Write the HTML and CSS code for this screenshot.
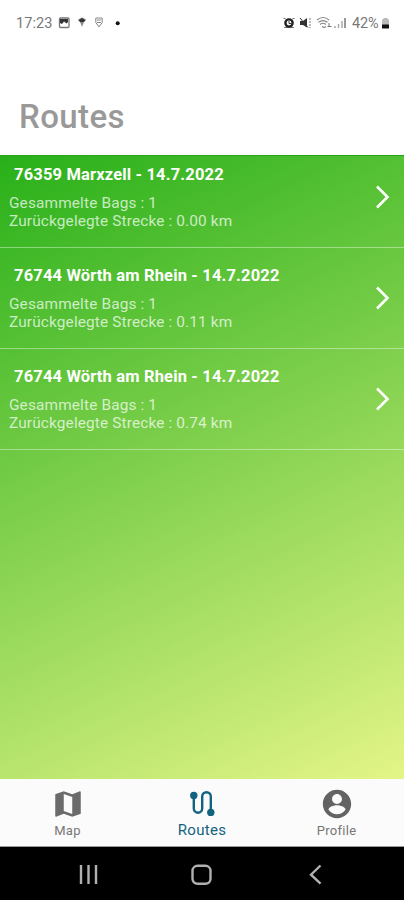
FILE: index.html
```html
<!DOCTYPE html>
<html lang="de">
<head>
<meta charset="utf-8">
<title>Routes</title>
<link rel="stylesheet" href="styles.css">
</head>
<body>
<div class="status">
  <span class="time">17:23</span>
  <svg class="st-left" width="66" height="14" viewBox="0 0 66 14">
    <rect x="1.500" y="2" width="9.500" height="9.500" rx="1" fill="none" stroke="#777" stroke-width="1.300"/>
    <path d="M2 3h8v3L8.500 7.500 6 5.500 4 8 2 7z" fill="#333"/>
    <path d="M20 3.500 24 1.500l4 2-2.500 3.500L24 11 22.500 7z" fill="#888"/>
    <path d="M20.500 4.500 24 2l3.500 2.500-2 1.500h-3z" fill="#333"/>
    <path d="M37.800 2h6.400v4.500L41 11 37.800 6.500z" fill="none" stroke="#888"/>
    <path d="M39 4h4M39 6.500h4" stroke="#888"/>
    <circle cx="59.700" cy="7.200" r="2" fill="#111"/>
  </svg>
  <svg class="st-right" width="66" height="14" viewBox="0 0 66 14">
    <path d="M1.500 2.500h2M10.500 2.500h2M2 11.500h10" stroke="#777" fill="none"/>
    <circle cx="7" cy="7" r="3.600" fill="#fff" stroke="#222" stroke-width="2.400"/>
    <path d="M7 5v2.500h2" stroke="#333" fill="none"/>
    <path d="M18 5h3l4-3v9.500L21 9h-3z" fill="#333"/>
    <path d="M18 2l8 9.500" stroke="#333"/><path d="M28 2v10" stroke="#777" stroke-dasharray="2 1"/>
    <path d="M35 4q6-5 12 0M36.500 6.300q4.500-3.500 9 0M38 8.500q3-2.500 6 0M40 10.500l2 1 2-1" fill="none" stroke="#888" stroke-width="1.200"/>
    <path d="M47 7v4M45.500 10.500h4" stroke="#777"/>
    <path d="M53 10v2M56.500 8v4M60 5v7" stroke="#aaa" stroke-width="1.500"/><path d="M63 2v10" stroke="#777" stroke-width="1.500"/>
  </svg>
  <span class="pct">42%</span>
  <svg class="batt" width="9" height="13" viewBox="0 0 9 13">
    <path d="M1 3 3 1h3l2 2v5H1z" fill="#bbb"/><path d="M1 7.500h7v4H1z" fill="#111"/>
  </svg>
</div>
<header class="header"><h1>Routes</h1></header>
<main class="list">
  <div class="row">
    <div class="info"><h2>76359 Marxzell - 14.7.2022</h2><p class="bags">Gesammelte Bags : 1</p><p>Zurückgelegte Strecke : 0.00 km</p></div>
    <svg class="chev" width="16" height="26" viewBox="0 0 16 26"><path d="M2 2.500 12.500 13 2 23.500" fill="none" stroke="#fff" stroke-width="2.600"/></svg>
  </div>
  <div class="row">
    <div class="info"><h2>76744 Wörth am Rhein - 14.7.2022</h2><p class="bags">Gesammelte Bags : 1</p><p>Zurückgelegte Strecke : 0.11 km</p></div>
    <svg class="chev" width="16" height="26" viewBox="0 0 16 26"><path d="M2 2.500 12.500 13 2 23.500" fill="none" stroke="#fff" stroke-width="2.600"/></svg>
  </div>
  <div class="row">
    <div class="info"><h2>76744 Wörth am Rhein - 14.7.2022</h2><p class="bags">Gesammelte Bags : 1</p><p>Zurückgelegte Strecke : 0.74 km</p></div>
    <svg class="chev" width="16" height="26" viewBox="0 0 16 26"><path d="M2 2.500 12.500 13 2 23.500" fill="none" stroke="#fff" stroke-width="2.600"/></svg>
  </div>
</main>
<nav class="tabs">
  <div class="tab">
    <svg width="34" height="34" viewBox="0 0 24 24"><path fill="#6b6b6b" d="M20.500 3l-.16.030L15 5.100 9 3 3.360 4.900c-.21.070-.36.250-.36.480V20.500c0 .28.220.5.500.5l.16-.030L9 18.900l6 2.100 5.640-1.900c.21-.070.36-.250.36-.480V3.500c0-.28-.22-.5-.5-.5zM15 19l-6-2.110V5l6 2.110V19z"/></svg>
    <span>Map</span>
  </div>
  <div class="tab active">
    <svg width="34" height="34" viewBox="0 0 34 34"><g fill="none" stroke="#12637f" stroke-width="2.400"><path d="M8.800 9v12.500a4.200 4.200 0 0 0 8.400 0V9.500a4.300 4.300 0 0 1 8.600 0V25"/></g><circle cx="8.800" cy="8.400" r="3.700" fill="#12637f"/><circle cx="25.800" cy="25.400" r="3.700" fill="#12637f"/></svg>
    <span>Routes</span>
  </div>
  <div class="tab">
    <svg width="34" height="34" viewBox="0 0 24 24"><path fill="#636363" d="M12 2C6.480 2 2 6.480 2 12s4.480 10 10 10 10-4.480 10-10S17.520 2 12 2zm0 3c1.930 0 3.500 1.570 3.500 3.500S13.930 12 12 12 8.500 10.430 8.500 8.500 10.070 5 12 5zm0 14.200c-2.500 0-4.710-1.280-6-3.220.03-1.990 4-3.080 6-3.080s5.970 1.090 6 3.080c-1.290 1.940-3.500 3.220-6 3.220z"/></svg>
    <span>Profile</span>
  </div>
</nav>
<div class="sysnav">
  <svg width="22" height="24" viewBox="0 0 22 24"><path d="M3 3v19M10.500 3v19M18 3v19" stroke="#b0b0b0" stroke-width="2.400"/></svg>
  <svg width="22" height="24" viewBox="0 0 22 24"><rect x="1.500" y="3.800" width="18" height="18" rx="5" fill="none" stroke="#b0b0b0" stroke-width="2.400"/></svg>
  <svg width="22" height="24" viewBox="0 0 22 24"><path d="M16.500 3.500 7 12.700l9.500 9" fill="none" stroke="#b0b0b0" stroke-width="2.400"/></svg>
</div>
</body>
</html>
```
FILE: styles.css
```css
* { box-sizing: border-box; margin: 0; padding: 0; }
body { width: 404px; height: 900px; display: flex; flex-direction: column; overflow: hidden; background: #fff; font-family: Roboto, sans-serif; }
svg { display: block; flex: none; }
.status { height: 46px; display: flex; align-items: center; padding: 0 14px 0 16px; color: #777; font-size: 14.5px; }
.time { width: 42px; letter-spacing: 0.1px; }
.st-right { margin-left: auto; }
.pct { width: 28px; margin-left: 4px; font-size: 14.5px; letter-spacing: -0.2px; }
.batt { margin-left: 1px; }
.header { height: 109px; padding: 51px 19px 0; }
h1 { font-size: 33px; line-height: 40px; font-weight: 500; color: #999; letter-spacing: 0.4px; }
.list { flex: 1; border-top: 1px solid #22a318; background: linear-gradient(155deg, #28b019, #e4f588); }
.row { height: 101px; display: flex; justify-content: space-between; padding: 0 13px 0 9px; border-bottom: 1px solid rgba(255, 255, 255, 0.4); }
.row:first-child { height: 92px; }
.info { padding-top: 17px; }
.row:first-child .info { padding-top: 8px; }
h2 { margin-left: 5px; font-size: 16.5px; line-height: 21px; font-weight: 700; color: #fff; letter-spacing: 0.16px; }
p { font-size: 15.4px; line-height: 18px; color: rgba(255, 255, 255, 0.72); letter-spacing: 0.14px; }
.bags { margin-top: 9px; }
.chev { margin-top: 37px; }
.row:first-child .chev { margin-top: 28px; }
.tabs { height: 68px; display: grid; grid-template-columns: 135px 134px 135px; background: #fbfbfb; border-bottom: 1px solid #999; }
.tab { display: flex; flex-direction: column; align-items: center; padding-top: 8px; color: #777; font-size: 13px; line-height: 20px; letter-spacing: 0.3px; }
.active { color: #12637f; font-size: 15px; line-height: 18px; letter-spacing: 0.3px; }
.sysnav { height: 53px; display: flex; justify-content: space-between; padding: 15px 78px; background: #000; }
```
